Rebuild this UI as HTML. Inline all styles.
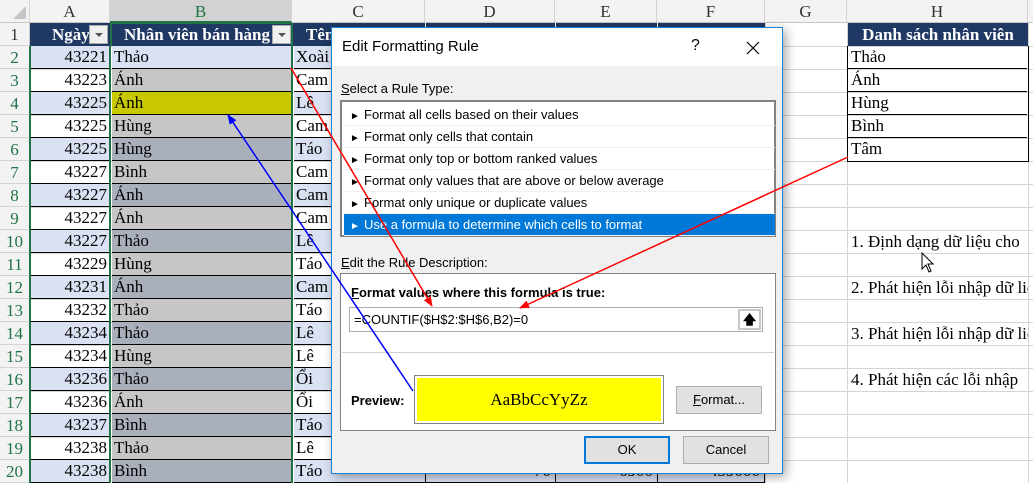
<!DOCTYPE html>
<html><head><meta charset="utf-8">
<style>
*{box-sizing:border-box;margin:0;padding:0}
body{width:1033px;height:483px;overflow:hidden;background:#fff;position:relative;font-family:"Liberation Serif",serif;font-size:16px;color:#000}
.abs{position:absolute}
.hdr{position:absolute;top:0;height:23px;background:#f3f3f3;border-right:1px solid #d4d4d4;border-bottom:1px solid #c6c6c6;text-align:center;font-size:17px;line-height:23px;color:#333}
.gv{position:absolute;top:23px;width:1px;height:460px;background:#d4d4d4}
.gh{position:absolute;left:30px;width:1003px;height:1px;background:#d4d4d4}
.rn{position:absolute;left:0;width:30px;height:23px;background:#f3f3f3;border-right:1px solid #c6c6c6;border-bottom:1px solid #d4d4d4;text-align:center;line-height:23px;font-size:17px;color:#217346}
.cell{position:absolute;height:23px;line-height:22px;border-bottom:1px solid #000;white-space:nowrap;overflow:hidden;font-size:17px}
.a{left:31px;width:79px;text-align:right;padding-right:3px}
.b{left:112px;width:179px;padding-left:2px}
.c{left:294px;width:131px;padding-left:2px}
.d{left:425px;width:130px;text-align:right;padding-right:4px}
.e{left:555px;width:102px;text-align:right;padding-right:4px}
.f{left:657px;width:108px;text-align:right;padding-right:4px}
.bl{background:#d9e1f2}
.g1{background:#c6c6c6}
.g2{background:#a9b0bc}
.nav{position:absolute;top:23px;height:23px;background:#1f3864;color:#fff;font-weight:bold;font-size:17px;line-height:23px;white-space:nowrap;overflow:hidden;text-align:center}
.dd{position:absolute;top:25px;width:19px;height:19px;background:#f0f0f0;border:1px solid #aaa}
.dd:after{content:"";position:absolute;left:5px;top:7px;border-left:4px solid transparent;border-right:4px solid transparent;border-top:4px solid #555}
.h{position:absolute;left:848px;width:179px;height:23px;line-height:22px;padding-left:3px;border-bottom:1px solid #000;font-size:17px}
.note{position:absolute;left:851px;width:177px;overflow:hidden;font-size:17px;line-height:22px;white-space:nowrap}
.dlg{position:absolute;left:331px;top:27px;width:452px;height:447px;background:#f0f0f0;border:1px solid #1883d7;box-shadow:3px 3px 10px rgba(0,0,0,.35);font-family:"Liberation Sans",sans-serif;font-size:13px;z-index:5}
.it{position:absolute;left:2px;width:431px;height:22px;line-height:21px;padding-left:6px;border-bottom:1px solid #f0f0f0;white-space:nowrap}
.it span{display:inline-block;width:14px;font-size:10px}
.btn{position:absolute;background:#e1e1e1;border:1px solid #adadad;text-align:center;line-height:26px}
</style></head><body>
<div class="hdr" style="left:0;width:30px;background:#f3f3f3"><div class="abs" style="right:3px;bottom:3px;width:0;height:0;border-left:13px solid transparent;border-bottom:13px solid #c6c6c6"></div></div>
<div class="hdr" style="left:30px;width:80px">A</div>
<div class="hdr" style="left:110px;width:182px;background:#d2d2d2;color:#217346;border-bottom:2px solid #217346">B</div>
<div class="hdr" style="left:292px;width:133px">C</div>
<div class="hdr" style="left:425px;width:130px">D</div>
<div class="hdr" style="left:555px;width:102px">E</div>
<div class="hdr" style="left:657px;width:108px">F</div>
<div class="hdr" style="left:765px;width:82px">G</div>
<div class="hdr" style="left:847px;width:181px">H</div>
<div class="hdr" style="left:1028px;width:10px"></div>
<div class="gv" style="left:765px"></div><div class="gv" style="left:847px"></div><div class="gv" style="left:1028px"></div>
<div class="gh" style="top:46px"></div><div class="gh" style="top:69px"></div><div class="gh" style="top:92px"></div><div class="gh" style="top:115px"></div><div class="gh" style="top:138px"></div><div class="gh" style="top:161px"></div><div class="gh" style="top:184px"></div><div class="gh" style="top:207px"></div><div class="gh" style="top:230px"></div><div class="gh" style="top:253px"></div><div class="gh" style="top:276px"></div><div class="gh" style="top:299px"></div><div class="gh" style="top:322px"></div><div class="gh" style="top:345px"></div><div class="gh" style="top:368px"></div><div class="gh" style="top:391px"></div><div class="gh" style="top:414px"></div><div class="gh" style="top:437px"></div><div class="gh" style="top:460px"></div>
<div class="rn" style="top:23px;color:#333">1</div>
<div class="rn" style="top:46px">2</div><div class="rn" style="top:69px">3</div><div class="rn" style="top:92px">4</div><div class="rn" style="top:115px">5</div><div class="rn" style="top:138px">6</div><div class="rn" style="top:161px">7</div><div class="rn" style="top:184px">8</div><div class="rn" style="top:207px">9</div><div class="rn" style="top:230px">10</div><div class="rn" style="top:253px">11</div><div class="rn" style="top:276px">12</div><div class="rn" style="top:299px">13</div><div class="rn" style="top:322px">14</div><div class="rn" style="top:345px">15</div><div class="rn" style="top:368px">16</div><div class="rn" style="top:391px">17</div><div class="rn" style="top:414px">18</div><div class="rn" style="top:437px">19</div><div class="rn" style="top:460px">20</div>
<div class="nav" style="left:30px;width:80px;text-align:left;padding-left:22px">Ngày</div><div class="dd" style="left:89px"></div>
<div class="nav" style="left:111px;width:181px;text-align:left;padding-left:13px">Nhân viên bán hàng</div><div class="dd" style="left:272px"></div>
<div class="nav" style="left:293px;width:132px;text-align:left;padding-left:13px">Tên</div>
<div class="nav" style="left:426px;width:129px"></div><div class="nav" style="left:556px;width:101px"></div><div class="nav" style="left:658px;width:107px"></div>
<div class="nav" style="left:848px;width:180px">Danh sách nhân viên</div>
<div class="cell a bl" style="top:46px">43221</div><div class="cell b bl" style="top:46px">Thảo</div><div class="cell c bl" style="top:46px">Xoài</div>
<div class="cell a" style="top:69px">43223</div><div class="cell b g1" style="top:69px">Ánh</div><div class="cell c" style="top:69px">Cam</div>
<div class="cell a bl" style="top:92px">43225</div><div class="cell b" style="top:92px;background:#c8c800">Ánh</div><div class="cell c bl" style="top:92px">Lê</div>
<div class="cell a" style="top:115px">43225</div><div class="cell b g1" style="top:115px">Hùng</div><div class="cell c" style="top:115px">Cam</div>
<div class="cell a bl" style="top:138px">43225</div><div class="cell b g2" style="top:138px">Hùng</div><div class="cell c bl" style="top:138px">Táo</div>
<div class="cell a" style="top:161px">43227</div><div class="cell b g1" style="top:161px">Bình</div><div class="cell c" style="top:161px">Cam</div>
<div class="cell a bl" style="top:184px">43227</div><div class="cell b g2" style="top:184px">Ánh</div><div class="cell c bl" style="top:184px">Cam</div>
<div class="cell a" style="top:207px">43227</div><div class="cell b g1" style="top:207px">Ánh</div><div class="cell c" style="top:207px">Cam</div>
<div class="cell a bl" style="top:230px">43227</div><div class="cell b g2" style="top:230px">Thảo</div><div class="cell c bl" style="top:230px">Lê</div>
<div class="cell a" style="top:253px">43229</div><div class="cell b g1" style="top:253px">Hùng</div><div class="cell c" style="top:253px">Táo</div>
<div class="cell a bl" style="top:276px">43231</div><div class="cell b g2" style="top:276px">Ánh</div><div class="cell c bl" style="top:276px">Cam</div>
<div class="cell a" style="top:299px">43232</div><div class="cell b g1" style="top:299px">Thảo</div><div class="cell c" style="top:299px">Táo</div>
<div class="cell a bl" style="top:322px">43234</div><div class="cell b g2" style="top:322px">Thảo</div><div class="cell c bl" style="top:322px">Lê</div>
<div class="cell a" style="top:345px">43234</div><div class="cell b g1" style="top:345px">Hùng</div><div class="cell c" style="top:345px">Lê</div>
<div class="cell a bl" style="top:368px">43236</div><div class="cell b g2" style="top:368px">Thảo</div><div class="cell c bl" style="top:368px">Ổi</div>
<div class="cell a" style="top:391px">43236</div><div class="cell b g1" style="top:391px">Ánh</div><div class="cell c" style="top:391px">Ổi</div>
<div class="cell a bl" style="top:414px">43237</div><div class="cell b g2" style="top:414px">Bình</div><div class="cell c bl" style="top:414px">Táo</div>
<div class="cell a" style="top:437px">43238</div><div class="cell b g1" style="top:437px">Thảo</div><div class="cell c" style="top:437px">Lê</div>
<div class="cell a bl" style="top:460px">43238</div><div class="cell b g2" style="top:460px">Bình</div><div class="cell c bl" style="top:460px">Táo</div>
<div class="cell d bl" style="top:460px;border-left:1px solid #000">70</div><div class="cell e bl" style="top:460px;border-left:1px solid #000">6900</div><div class="cell f bl" style="top:460px;border-left:1px solid #000;border-right:1px solid #000">439000</div>
<div class="abs" style="left:29px;top:46px;width:2px;height:437px;background:#217346"></div>
<div class="abs" style="left:109px;top:46px;width:2px;height:437px;background:#217346"></div>
<div class="abs" style="left:110px;top:23px;width:2px;height:23px;background:#217346"></div>
<div class="abs" style="left:291px;top:23px;width:2px;height:460px;background:#217346"></div>
<div class="abs" style="left:110px;top:22px;width:182px;height:2px;background:#217346"></div>
<div class="abs" style="left:847px;top:46px;width:182px;height:116px;border:1px solid #000;border-top:none"></div>
<div class="h" style="top:46px">Thảo</div><div class="h" style="top:69px">Ánh</div><div class="h" style="top:92px">Hùng</div><div class="h" style="top:115px">Bình</div><div class="h" style="top:138px;border-bottom:none">Tâm</div>
<div class="note" style="top:231px">1. Định dạng dữ liệu cho</div>
<div class="note" style="top:277px">2. Phát hiện lỗi nhập dữ liệu</div>
<div class="note" style="top:323px">3. Phát hiện lỗi nhập dữ liệu</div>
<div class="note" style="top:369px">4. Phát hiện các lỗi nhập</div>
<svg class="abs" style="left:921px;top:252px;z-index:6" width="14" height="22" viewBox="0 0 14 22"><path d="M1 1 L1 17 L5 13 L8 20 L10 19 L7 12 L12 12 Z" fill="#fff" stroke="#000" stroke-width="1"/></svg>
<div class="dlg">
 <div class="abs" style="left:0;top:0;width:450px;height:38px;background:#fff"></div>
 <div class="abs" style="left:10px;top:10px;font-size:15px;color:#000">Edit Formatting Rule</div>
 <div class="abs" style="left:359px;top:9px;font-size:16px">?</div>
 <svg class="abs" style="left:414px;top:13px" width="14" height="14"><path d="M1 1L13 13M13 1L1 13" stroke="#000" stroke-width="1.2"/></svg>
 <div class="abs" style="left:9px;top:53px"><u>S</u>elect a Rule Type:</div>
 <div class="abs" style="left:8px;top:72px;width:436px;height:137px;background:#fff;border:2px solid #828282">
  <div class="it" style="top:2px"><span>►</span>Format all cells based on their values</div>
  <div class="it" style="top:24px"><span>►</span>Format only cells that contain</div>
  <div class="it" style="top:46px"><span>►</span>Format only top or bottom ranked values</div>
  <div class="it" style="top:68px"><span>►</span>Format only values that are above or below average</div>
  <div class="it" style="top:90px"><span>►</span>Format only unique or duplicate values</div>
  <div class="it" style="top:112px;background:#0078d7;color:#fff"><span>►</span>Use a formula to determine which cells to format</div>
 </div>
 <div class="abs" style="left:9px;top:227px"><u>E</u>dit the Rule Description:</div>
 <div class="abs" style="left:8px;top:245px;width:436px;height:158px;background:#fff;border:1px solid #828282">
  <div class="abs" style="left:10px;top:11px;font-weight:bold"><u>F</u>ormat values where this formula is true:</div>
  <div class="abs" style="left:8px;top:33px;width:414px;height:25px;border:1px solid #adadad;line-height:23px;padding-left:4px">=COUNTIF($H$2:$H$6,B2)=0
   <div class="abs" style="right:1px;top:1px;width:23px;height:21px;background:#fff;border:2px solid #c8c8c8;text-align:center;line-height:17px;font-weight:bold">&#129093;</div>
  </div>
  <div class="abs" style="left:1px;top:78px;width:432px;height:1px;background:#d0d0d0"></div>
  <div class="abs" style="left:10px;top:119px;font-weight:bold">Preview:</div>
  <div class="abs" style="left:73px;top:101px;width:250px;height:49px;border:1px solid #828282;padding:2px"><div style="width:100%;height:100%;background:#ffff00;text-align:center;line-height:43px;font-family:'Liberation Serif',serif;font-size:17px">AaBbCcYyZz</div></div>
  <div class="btn" style="left:335px;top:112px;width:86px;height:28px"><u>F</u>ormat...</div>
 </div>
 <div class="btn" style="left:252px;top:408px;width:86px;height:28px;border:2px solid #0078d7;line-height:24px">OK</div>
 <div class="btn" style="left:351px;top:408px;width:86px;height:28px">Cancel</div>
</div>
<svg class="abs" style="left:0;top:0;z-index:7" width="1033" height="483">
 <defs>
  <marker id="mr" markerWidth="10" markerHeight="8" refX="9" refY="4" orient="auto" markerUnits="userSpaceOnUse"><path d="M0 0L10 4L0 8Z" fill="#ff0000"/></marker>
  <marker id="mb" markerWidth="10" markerHeight="8" refX="9" refY="4" orient="auto" markerUnits="userSpaceOnUse"><path d="M0 0L10 4L0 8Z" fill="#0000ff"/></marker>
 </defs>
 <line x1="291" y1="68" x2="432" y2="306" stroke="#ff0000" stroke-width="1.5" marker-end="url(#mr)"/>
 <line x1="848" y1="157" x2="520" y2="308" stroke="#ff0000" stroke-width="1.5" marker-end="url(#mr)"/>
 <line x1="413" y1="391" x2="228" y2="115" stroke="#0000ff" stroke-width="1.5" marker-end="url(#mb)"/>
</svg>
</body></html>
